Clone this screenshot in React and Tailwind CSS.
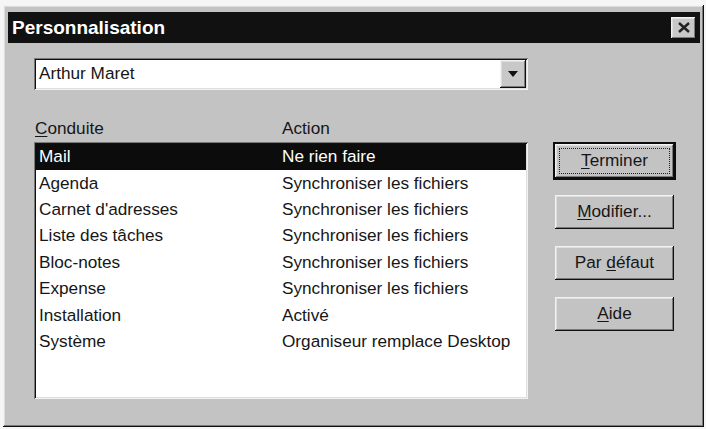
import React from 'react';

const rows = [
  ['Mail', 'Ne rien faire'],
  ['Agenda', 'Synchroniser les fichiers'],
  ['Carnet d\'adresses', 'Synchroniser les fichiers'],
  ['Liste des tâches', 'Synchroniser les fichiers'],
  ['Bloc-notes', 'Synchroniser les fichiers'],
  ['Expense', 'Synchroniser les fichiers'],
  ['Installation', 'Activé'],
  ['Système', 'Organiseur remplace Desktop'],
];

// bevels, windows 95 style
const raised = 'shadow-[inset_-1px_-1px_0_#101010,inset_1px_1px_0_#f2f2f2,inset_-2px_-2px_0_#7a7a7a,inset_2px_2px_0_#dedede]';
const sunken = 'shadow-[inset_1px_1px_0_#7a7a7a,inset_-1px_-1px_0_#f2f2f2,inset_2px_2px_0_#101010,inset_-2px_-2px_0_#dedede]';

const Button = ({ children, focused }) => (
  <div className={focused ? 'border-2 border-[#0c0c0c]' : 'border-2 border-transparent'}>
    <div className={`${raised} bg-[#c3c3c3] h-[34px] flex items-center justify-center p-[4px]`}>
      <div className={`w-full h-full flex items-center justify-center ${focused ? 'border border-dotted border-[#222]' : ''}`}>
        {children}
      </div>
    </div>
  </div>
);

export default function App() {
  return (
    <div className="w-[706px] h-[429px] bg-[#f6f6f6] pl-[3px] pt-[5px] font-['Liberation_Sans',Arial,sans-serif] text-[17.2px] text-[#161616]">
      <div className={`w-[701px] h-[422px] bg-[#c3c3c3] ${raised} pl-[5px] pr-[4px] pt-[7px]`}>
        {/* title bar */}
        <div className="h-[31px] bg-[#111] flex items-center justify-between pl-[4px] pr-[4px]">
          <span className="text-white font-bold text-[19px] leading-none">Personnalisation</span>
          <div className={`w-[25px] h-[22px] bg-[#c8c8c8] ${raised} flex items-center justify-center`}>
            <svg width="12" height="11" viewBox="0 0 12 11">
              <path d="M1 1 L11 10 M11 1 L1 10" stroke="#222" strokeWidth="2.4" />
            </svg>
          </div>
        </div>

        <div className="pl-[26px]">
          {/* combo */}
          <div className={`mt-[15px] w-[494px] h-[32px] bg-white ${sunken} flex items-center justify-between pl-[5px] pr-[2px]`}>
            <span>Arthur Maret</span>
            <div className={`w-[26px] h-[28px] bg-[#c8c8c8] ${raised} flex items-center justify-center`}>
              <svg width="10" height="6" viewBox="0 0 10 6">
                <path d="M0 0 H10 L5 6 Z" fill="#111" />
              </svg>
            </div>
          </div>

          {/* headers */}
          <div className="mt-[26px] h-[26px] flex items-center">
            <span className="w-[248px] pl-[1px]"><span className="underline underline-offset-2">C</span>onduite</span>
            <span>Action</span>
          </div>

          <div className="flex">
            {/* list */}
            <div className={`w-[494px] h-[257px] bg-white ${sunken} p-[2px]`}>
              {rows.map(([a, b], i) => (
                <div key={a} className={`h-[26.4px] flex items-center ${i === 0 ? 'bg-[#0c0c0c] text-white' : ''}`}>
                  <span className="w-[246px] pl-[3px]">{a}</span>
                  <span>{b}</span>
                </div>
              ))}
            </div>

            {/* buttons */}
            <div className="ml-[25px] w-[123px] flex flex-col gap-[13px]">
              <Button focused>
                <span><span className="underline underline-offset-2">T</span>erminer</span>
              </Button>
              <Button>
                <span><span className="underline underline-offset-2">M</span>odifier...</span>
              </Button>
              <Button>
                <span>Par <span className="underline underline-offset-2">d</span>éfaut</span>
              </Button>
              <Button>
                <span><span className="underline underline-offset-2">A</span>ide</span>
              </Button>
            </div>
          </div>
        </div>
      </div>
    </div>
  );
}
